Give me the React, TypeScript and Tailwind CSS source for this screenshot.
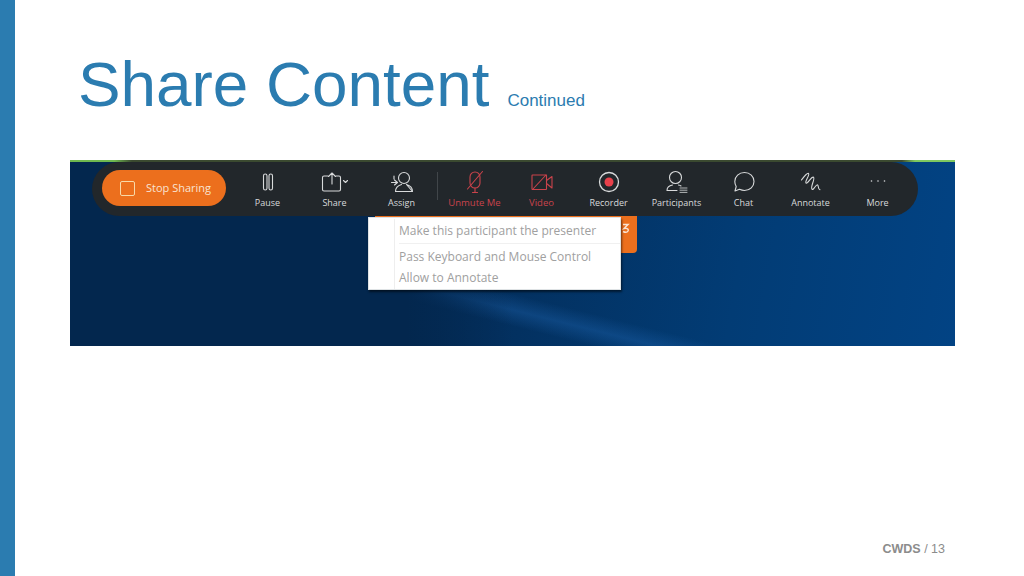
import type { ReactNode } from "react";

const stroke = { fill: "none", stroke: "currentColor", strokeWidth: 1.1, strokeLinecap: "round", strokeLinejoin: "round" } as const;

function Pause() {
  return (
    <svg width="24" height="24" viewBox="0 0 24 24" {...stroke}>
      <rect x="7.500" y="4" width="3.500" height="16" rx="1.750" />
      <rect x="13" y="4" width="3.500" height="16" rx="1.750" />
    </svg>
  );
}

function Share() {
  return (
    <svg width="30" height="24" viewBox="0 0 30 24" {...stroke}>
      <path d="M8 6H4a1.500 1.500 0 0 0-1.500 1.500v12A1.500 1.500 0 0 0 4 21h15a1.500 1.500 0 0 0 1.500-1.500v-12A1.500 1.500 0 0 0 19 6h-3" />
      <path d="M12 14V3M8.500 6.500L12 3l3.500 3.500" />
      <path d="M23.500 10.500l2 2 2-2" />
    </svg>
  );
}

function Assign() {
  return (
    <svg width="26" height="24" viewBox="0 0 26 24" {...stroke}>
      <circle cx="15" cy="8" r="5.500" />
      <path d="M6.500 21.500c0-3.500 2.500-6 6-7M17.500 14.500c3.500 1 6 3.500 6 7zM6.500 21.500h17" />
      <path d="M2.500 12.500h6M5.500 10l3 2.500-3 2.500M5 6v3" />
    </svg>
  );
}

function Mic() {
  return (
    <svg width="24" height="24" viewBox="0 0 24 24" {...stroke}>
      <rect x="7" y="2" width="10" height="16" rx="5" />
      <path d="M12 18v4M9.500 22.500h5M4.500 19L19.500 1.500" />
    </svg>
  );
}

function Video() {
  return (
    <svg width="24" height="24" viewBox="0 0 24 24" {...stroke}>
      <rect x="2" y="5" width="14.500" height="14.500" rx="0.500" />
      <path d="M16.500 10.500L22 6.500v11.500l-5.500-4.500M2.500 19.500L16 5" />
    </svg>
  );
}

function Recorder() {
  return (
    <svg width="24" height="24" viewBox="0 0 24 24">
      <circle cx="12" cy="12" r="9.500" fill="none" stroke="currentColor" strokeWidth="1.300" />
      <circle cx="12" cy="12" r="4.500" fill="#e8404a" />
    </svg>
  );
}

function Participants() {
  return (
    <svg width="24" height="24" viewBox="0 0 24 24" {...stroke}>
      <circle cx="10.500" cy="7.500" r="6" />
      <path d="M2 20.500c0-3 2.500-5 5.500-5.500M13.500 15c1 .2 1.800.5 2.500 1M2 20.500h10" />
      <path d="M15 18h7M15 20.200h7M15 22.400h7" strokeWidth="0.800" />
    </svg>
  );
}

function Chat() {
  return (
    <svg width="24" height="24" viewBox="0 0 24 24" {...stroke}>
      <path d="M12.500 2.500c5.500 0 9.500 4 9.500 9s-4 9-9.500 9c-1.500 0-3.500-.5-5-1.200L3 21l1.200-4.500C3.300 15 2.800 13.300 2.800 11.500c0-5 4.200-9 9.700-9z" />
    </svg>
  );
}

function Annotate() {
  return (
    <svg width="24" height="24" viewBox="0 0 24 24" {...stroke}>
      <path d="M2.500 10C5.500 6 8 2.500 9.500 3.500c1.800 1.300-4 7.500-2.500 9.500 1.500 1.300 5.500-7 7.500-5.800 2 1.300-3.500 10-1.500 12 1.600 1.300 3.500-4.500 5.500-4.500 1.300.2 0 4.500 2.500 5" />
    </svg>
  );
}

function More() {
  return (
    <svg width="24" height="24" viewBox="0 0 24 24" fill="currentColor">
      <circle cx="5.500" cy="11" r="0.800" />
      <circle cx="12" cy="11" r="0.800" />
      <circle cx="18.500" cy="11" r="0.800" />
    </svg>
  );
}

const tools: { label: string; icon: ReactNode; red?: boolean }[] = [
  { label: "Pause", icon: <Pause /> },
  { label: "Share", icon: <Share /> },
  { label: "Assign", icon: <Assign /> },
  { label: "Unmute Me", icon: <Mic />, red: true },
  { label: "Video", icon: <Video />, red: true },
  { label: "Recorder", icon: <Recorder /> },
  { label: "Participants", icon: <Participants /> },
  { label: "Chat", icon: <Chat /> },
  { label: "Annotate", icon: <Annotate /> },
  { label: "More", icon: <More /> },
];

function Tool({ label, icon, red }: { label: string; icon: ReactNode; red?: boolean }) {
  return (
    <div className={`flex w-[67px] shrink-0 flex-col items-center gap-[3px] ${red ? "text-[#c9434b]" : "text-[#d8dadb]"}`}>
      <div className="flex h-6 items-center justify-center">{icon}</div>
      <span className={`whitespace-nowrap leading-[11px] ${red ? "text-[9.500px]" : "text-[9px]"}`}>{label}</span>
    </div>
  );
}

export default function App() {
  return (
    <div className="flex h-[576px] w-[1024px] overflow-hidden bg-white font-['Liberation_Sans',Arial,sans-serif]">
      <div className="w-[15px] shrink-0 bg-[#2b7cb0]" />

      <div className="flex flex-1 flex-col">
        <div className="ml-[63px] flex h-[160px] items-baseline pt-[46px]">
          <h1 className="text-[63.800px] font-normal leading-[76px] text-[#2b7cb0]">Share Content</h1>
          <span className="ml-[18px] text-[17px] text-[#2b7cb0]">Continued</span>
        </div>

        <div className="relative ml-[55px] h-[186px] w-[885px] bg-[linear-gradient(90deg,#03274e_38%,rgba(3,39,78,0)_50%),linear-gradient(14deg,transparent_32%,rgba(30,100,175,0.38)_36%,transparent_40%),linear-gradient(100deg,#052c56_0%,#02254b_20%,#03305f_50%,#023c75_75%,#024384_100%)] font-['Open_Sans','Noto_Sans',sans-serif]">
          <div className="h-0.5 bg-[linear-gradient(90deg,#6fb84f_0%,#6fb84f_5%,#3b4a30_7%,#3b4a30_94%,#7ec860_95.500%,#7ec860_100%)]" />

          <div className="ml-[22px] flex h-[54px] w-[826px] items-center rounded-[27px] bg-[#22272b] pl-[10px]">
            <div className="mb-0.5 flex h-9 w-[124px] shrink-0 items-center gap-[11px] rounded-[18px] bg-[#ec6f1d] pl-[18px]">
              <div className="size-[15px] rounded-[2px] border border-[#f8d9a8]" />
              <span className="text-[11px] text-[#f9e3d2]">Stop Sharing</span>
            </div>
            <div className="ml-[8px] flex">
              {tools.map((t) => (
                <div
                  key={t.label}
                  className={`relative ${t.label === "Assign" ? "mr-[6px]" : ""} ${t.label === "Recorder" ? "mr-px" : ""}`}
                >
                  <Tool {...t} />
                  {t.label === "Assign" && <div className="absolute right-[-3px] top-0.5 h-7 w-px bg-[#41464a]" />}
                </div>
              ))}
            </div>
          </div>

          <div className="absolute left-[305px] top-14 flex h-[37px] w-[262px] items-start justify-end rounded-br-[4px] bg-[#ec6f1d] pr-[6px] pt-[6px] text-[#f9e3d2]">
            <svg width="10" height="12" viewBox="0 0 10 12" fill="none" stroke="currentColor" strokeWidth="1.500">
              <path d="M2 2.500h5L3 6.500c2-.5 5 0 4 2.500-.8 1.500-3 1.500-5 .5" />
            </svg>
          </div>

          <div className="absolute left-[298px] top-[57px] flex h-[73px] w-[253px] flex-col border border-[#dfe3e5] bg-white pt-[1px] text-[12px] text-[#a0a0a0] shadow-[1px_2px_2px_rgba(0,0,0,0.55)]">
            <div className="ml-[25px] h-full border-l border-[#eee] pl-[4px]">
              <div className="flex h-[25px] items-center whitespace-nowrap border-b border-[#f0f0f0]">Make this participant the presenter</div>
              <div className="flex h-[25px] items-center whitespace-nowrap">Pass Keyboard and Mouse Control</div>
              <div className="flex h-[18px] items-center whitespace-nowrap">Allow to Annotate</div>
            </div>
          </div>
        </div>

        <div className="mt-[196px] mr-[79px] self-end text-[12.500px] leading-[14px] text-[#8c8c8c]">
          <span className="font-bold">CWDS</span> / 13
        </div>
      </div>
    </div>
  );
}
